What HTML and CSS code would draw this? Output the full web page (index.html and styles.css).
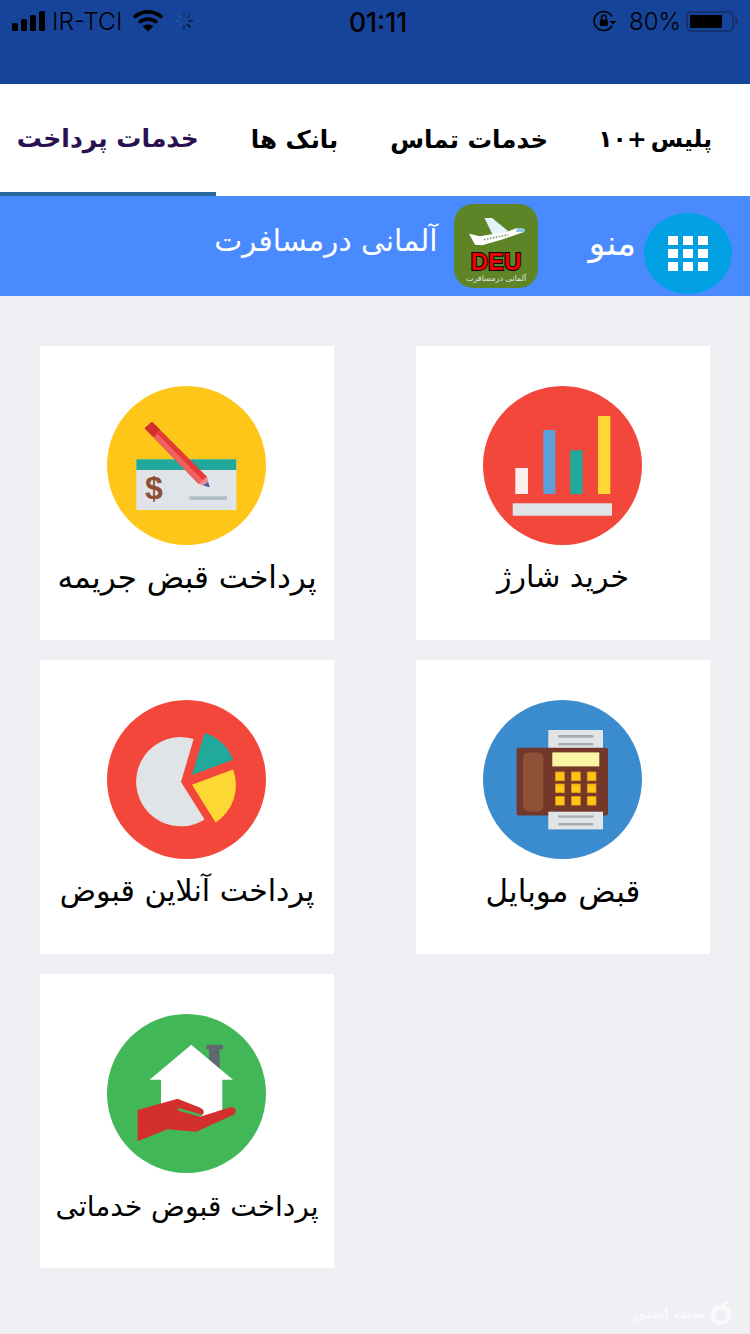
FILE: index.html
```html
<!DOCTYPE html>
<html lang="fa">
<head>
  <meta charset="UTF-8">
  <meta name="viewport" content="width=device-width, initial-scale=1.0">
  <title>خدمات پرداخت</title>
  <link rel="stylesheet" href="styles.css">
</head>
<body>
  <div class="top-bar">
    <div class="status-bar">
      <div class="status-left">
        <svg class="signal" width="34" height="20" viewBox="0 0 34 20"><rect x="0" y="12" width="6" height="8" rx="1.5"/><rect x="9" y="8" width="6" height="12" rx="1.5"/><rect x="18" y="4" width="6" height="16" rx="1.5"/><rect x="27" y="0" width="6" height="20" rx="1.5"/></svg>
        <span class="carrier">IR-TCI</span>
        <svg class="wifi" width="30" height="22" viewBox="0 0 30 22"><path d="M1 7.5 C9 0 21 0 29 7.5" fill="none" stroke="#000" stroke-width="3.6"/><path d="M6 12.5 C11 8 19 8 24 12.5" fill="none" stroke="#000" stroke-width="3.6"/><path d="M15 21.5 L9.8 16.4 C12.6 13.8 17.4 13.8 20.2 16.4 Z"/></svg>
        <svg class="spinner" width="20" height="20" viewBox="0 0 20 20"><g stroke-width="1.6" fill="none"><path d="M10 1 V6" stroke="#1c3a75"/><path d="M10 14 V19" stroke="#0d2a5e"/><path d="M1 10 H6" stroke="#2a57a8"/><path d="M14 10 H19" stroke="#0b1c40"/><path d="M3.6 3.6 L7 7" stroke="#2a57a8"/><path d="M16.4 3.6 L13 7" stroke="#13306a"/><path d="M3.6 16.4 L7 13" stroke="#224a94"/><path d="M16.4 16.4 L13 13" stroke="#05122e"/></g></svg>
      </div>
      <span class="clock">01:11</span>
      <div class="status-right">
        <svg class="rotation-lock" width="24" height="22" viewBox="0 0 24 22"><path d="M19 6.5 A9.5 9.5 0 1 0 19 15.5" fill="none" stroke="#000" stroke-width="1.6"/><path d="M16.5 11 L23.5 11 L20 14.6 Z"/><rect x="6.8" y="9.5" width="8" height="6.5" rx="1"/><path d="M8.5 9.5 V7.5 A2.3 2.3 0 0 1 13.1 7.5 V9.5" fill="none" stroke="#000" stroke-width="1.4"/></svg>
        <span class="battery-text">80%</span>
        <div class="battery"><div class="battery-fill"></div></div>
        <div class="battery-nub"></div>
      </div>
    </div>
  </div>

  <nav class="tabs">
    <div class="tab tab-plus">پلیس +۱۰</div>
    <div class="tab">خدمات تماس</div>
    <div class="tab">بانک ها</div>
    <div class="tab tab-active">خدمات پرداخت</div>
  </nav>

  <header class="menu-bar">
    <div class="menu-btn">
      <div class="menu-dots">
        <i></i><i></i><i></i><i></i><i></i><i></i><i></i><i></i><i></i>
      </div>
    </div>
    <span class="menu-label">منو</span>
    <svg class="app-logo" width="84" height="84" viewBox="0 0 84 84">
      <rect width="84" height="84" rx="19" fill="#5e8428"/>
      <path d="M30.5 14 L38 14 L54.4 27.3 L38.6 30.7 Z" fill="#e4f3fa"/>
      <path d="M15 29.7 L26 32.3 L54.4 27.3 L63 24 L71 25 L70 28 L47.4 35.7 L28 41.3 L21 40.7 Z" fill="#fff"/>
      <path d="M63 24 L71 25 L70 28 L62 28 Z" fill="#8ec5e6"/>
      <path d="M30 35.7 L54.4 30.7" fill="none" stroke="#6b8a4a" stroke-width="1.4" stroke-dasharray="1.5 1.5"/>
      <text class="logo-deu" x="42" y="66">DEU</text>
      <text class="logo-sub" x="42" y="77">آلمانی درمسافرت</text>
    </svg>
    <span class="menu-title">آلمانی درمسافرت</span>
  </header>

  <main class="grid">
    <a class="card">
      <svg class="card-icon" viewBox="0 0 159 159">
        <circle cx="79.5" cy="79.5" r="79.5" fill="#f2473a"/>
        <rect x="32.3" y="82" width="12.7" height="26" fill="#fdeeee"/>
        <rect x="60.3" y="44" width="12" height="64" fill="#5aa0da"/>
        <rect x="87.3" y="64.3" width="12.3" height="43.7" fill="#21a99b"/>
        <rect x="115" y="30" width="12.3" height="78" fill="#fdd835"/>
        <rect x="29.7" y="117.3" width="99.3" height="12.4" fill="#e0e4e7"/>
      </svg>
      <span class="card-label">خرید شارژ</span>
    </a>

    <a class="card">
      <svg class="card-icon" viewBox="0 0 159 159">
        <circle cx="79.5" cy="79.5" r="79.5" fill="#ffc61a"/>
        <rect x="29.3" y="73.3" width="100" height="50.7" fill="#e0e4e8"/>
        <rect x="29.3" y="73.3" width="100" height="10.7" fill="#20a99a"/>
        <text class="check-dollar" x="47" y="113">$</text>
        <rect x="82.3" y="110.3" width="37.7" height="3.7" fill="#b0bec5"/>
        <path d="M37.6 42.3 L45 35.7 L100 90.7 L91.6 98 Z" fill="#e53935"/>
        <path d="M47 51.5 L50.5 48 L95.8 94.3 L91.6 98 Z" fill="#ef6262"/>
        <path d="M37.6 42.3 L45 35.7 L53 43.5 L45.6 50.5 Z" fill="#d32f2f"/>
        <path d="M91.6 98 L100 90.7 L102.6 101.3 Z" fill="#f08a8a"/>
        <path d="M96.5 99.5 L101 96 L102.6 101.3 Z" fill="#2f66b0"/>
      </svg>
      <span class="card-label label-large">پرداخت قبض جریمه</span>
    </a>

    <a class="card">
      <svg class="card-icon" viewBox="0 0 159 159">
        <circle cx="79.5" cy="79.5" r="79.5" fill="#3a8cce"/>
        <rect x="65.3" y="30" width="54.7" height="18" fill="#e1e5e8"/>
        <rect x="75.3" y="35" width="35" height="2.7" fill="#a4abad"/>
        <rect x="75.3" y="43" width="35" height="2.4" fill="#a4abad"/>
        <rect x="33.6" y="47.7" width="91.4" height="67.7" rx="2" fill="#73382a"/>
        <rect x="40" y="52.4" width="20.3" height="59" rx="6" fill="#8d5238"/>
        <rect x="69.3" y="52.4" width="47" height="14" fill="#fbf4a5"/>
        <g fill="#ffc515" stroke="#e09a18" stroke-width="0.8">
          <rect x="72.6" y="72" width="8.7" height="8.7"/><rect x="88.6" y="72" width="8.7" height="8.7"/><rect x="104.3" y="72" width="8.7" height="8.7"/>
          <rect x="72.6" y="84" width="8.7" height="8.7"/><rect x="88.6" y="84" width="8.7" height="8.7"/><rect x="104.3" y="84" width="8.7" height="8.7"/>
          <rect x="72.6" y="96.4" width="8.7" height="8.7"/><rect x="88.6" y="96.4" width="8.7" height="8.7"/><rect x="104.3" y="96.4" width="8.7" height="8.7"/>
        </g>
        <rect x="65.3" y="111.7" width="54.7" height="17.7" fill="#e1e5e8"/>
        <rect x="75.3" y="115.4" width="35" height="2.3" fill="#a4abad"/>
        <rect x="75.3" y="123" width="35" height="2.4" fill="#a4abad"/>
      </svg>
      <span class="card-label label-large">قبض موبایل</span>
    </a>

    <a class="card">
      <svg class="card-icon" viewBox="0 0 159 159">
        <circle cx="79.5" cy="79.5" r="79.5" fill="#f2473a"/>
        <path d="M74 82 L86.6 39 A44.6 44.6 0 1 0 97.6 119.4 Z" fill="#e0e4e7"/>
        <path d="M85 75 L97.6 33 A43.8 43.8 0 0 1 126 59.7 Z" fill="#21a99b"/>
        <path d="M85 84.7 L126 69.4 A44 44 0 0 1 108.6 122.4 Z" fill="#fdd835"/>
      </svg>
      <span class="card-label">پرداخت آنلاین قبوض</span>
    </a>

    <a class="card card-left">
      <svg class="card-icon" viewBox="0 0 159 159">
        <circle cx="79.5" cy="79.5" r="79.5" fill="#41b757"/>
        <path d="M99.3 30.7 H116 V35.3 H112.6 V56 H102 V35.3 H99.3 Z" fill="#616770"/>
        <path d="M84.3 30.7 L126 65.7 H115.3 V104 H54 V65.7 H42.6 Z" fill="#fff"/>
        <path d="M30.6 96 L70.6 84.7 L93.3 93.7 C98 96 98 100 93.3 102 L93 102.8 L123.3 93.3 C129 92 131 98.5 126 101 L89.3 117.7 L60.6 115.3 L30.6 127.3 Z" fill="#d32f2f"/>
        <path d="M72 95.5 L93.3 101.5" fill="none" stroke="#41b757" stroke-width="2.6" stroke-linecap="round"/>
      </svg>
      <span class="card-label label-small">پرداخت قبوض خدماتی</span>
    </a>
  </main>

  <div class="watermark">
    <svg width="22" height="26" viewBox="0 0 22 26"><circle cx="11" cy="15" r="8" fill="none" stroke="#fff" stroke-width="4.5"/><path d="M11 6 C12 3 15 1.5 18 1.5 C17.5 4.5 15 6.5 11 6 Z" fill="#fff"/></svg>
    <span>سیب استور</span>
  </div>
</body>
</html>
```

FILE: styles.css
```css
* { box-sizing: border-box; }

html, body { margin: 0; padding: 0; }

body {
  width: 750px;
  height: 1334px;
  overflow: hidden;
  position: relative;
  background: #efeff4;
  font-family: "DejaVu Sans", sans-serif;
  color: #000;
}

/* status bar */
.top-bar {
  height: 84px;
  background: #17449b;
}
.status-bar {
  height: 42px;
  padding: 0 12px;
  display: flex;
  justify-content: space-between;
  align-items: center;
  position: relative;
  font-family: Inter, "Liberation Sans", sans-serif;
  font-size: 24px;
}
.status-left, .status-right {
  display: flex;
  align-items: center;
}
.carrier { margin-left: 6px; font-size: 24.5px; font-weight: 300; }
.wifi { margin-left: 11px; }
.spinner { margin-left: 11px; }
.clock {
  position: absolute;
  left: 349px;
  top: 6px;
  font-size: 26.5px;
  font-weight: 500;
}
.rotation-lock { margin-right: 12px; }
.battery-text { font-size: 24px; font-weight: 300; margin-right: 5px; }
.battery {
  width: 48px;
  height: 21px;
  border: 2px solid #12336f;
  border-radius: 5px;
  padding: 2px;
}
.battery-fill { width: 80%; height: 100%; background: #000; }
.battery-nub {
  width: 3px;
  height: 8px;
  margin-left: 1px;
  background: #12336f;
  border-radius: 0 3px 3px 0;
}

/* tabs */
.tabs {
  height: 112px;
  background: #fff;
  display: flex;
  direction: rtl;
  padding-right: 21px;
  gap: 18px;
}
.tab {
  padding: 0 17px 2px;
  display: flex;
  align-items: center;
  font-size: 24.5px;
  font-weight: bold;
  white-space: nowrap;
}
.tab-plus {
  font-size: 23.5px;
  word-spacing: -4px;
  margin-left: -2px;
}
.tab-active {
  color: #2a1050;
  font-size: 25px;
  border-bottom: 4px solid #276a9c;
  padding-bottom: 0;
}

/* menu row */
.menu-bar {
  height: 100px;
  background: #4a8aff;
  display: flex;
  direction: rtl;
  align-items: flex-start;
  padding-right: 18px;
  color: #fff;
}
.menu-btn {
  width: 88px;
  height: 81px;
  margin-top: 17px;
  border-radius: 50%;
  background: #00a0e3;
  display: flex;
  align-items: center;
  justify-content: center;
}
.menu-dots {
  display: grid;
  grid-template-columns: repeat(3, 10px);
  grid-template-rows: repeat(3, 9px);
  gap: 4px 5px;
}
.menu-dots i { background: #fff; }
.menu-label {
  margin-right: 8px;
  margin-top: 27px;
  font-size: 35px;
}
.app-logo {
  margin-right: 51px;
  margin-top: 8px;
}
.menu-title {
  margin-right: 16px;
  margin-top: 27px;
  font-size: 29.7px;
  white-space: nowrap;
}
.logo-deu {
  font-family: "Liberation Sans", sans-serif;
  font-size: 24px;
  font-weight: bold;
  fill: #f00000;
  stroke: #000;
  stroke-width: 2px;
  paint-order: stroke;
  text-anchor: middle;
}
.logo-sub {
  font-size: 8px;
  fill: #e6e6e6;
  text-anchor: middle;
}
.check-dollar {
  font-family: "Liberation Sans", sans-serif;
  font-size: 32px;
  font-weight: bold;
  fill: #8f4e35;
  text-anchor: middle;
}

/* card grid */
.grid {
  direction: rtl;
  display: grid;
  grid-template-columns: 294px 294px;
  grid-auto-rows: 294px;
  column-gap: 82px;
  row-gap: 20px;
  padding: 50px 40px 0;
}
.card {
  background: #fff;
  padding-top: 40px;
  display: flex;
  flex-direction: column;
  align-items: center;
}
.card-left { grid-column: 2; }
.card-icon {
  width: 159px;
  height: 159px;
  margin-right: 1.5px;
  display: block;
}
.card-label {
  height: 40px;
  margin-top: 12px;
  line-height: 40px;
  font-size: 30px;
  white-space: nowrap;
}
.label-large { font-size: 31px; }
.label-small { font-size: 28px; margin-top: 14px; }

.watermark {
  position: absolute;
  right: 18px;
  bottom: 8px;
  display: flex;
  direction: rtl;
  align-items: center;
  gap: 5px;
  color: #fff;
  font-size: 13px;
  font-weight: bold;
  opacity: 0.7;
}
```
